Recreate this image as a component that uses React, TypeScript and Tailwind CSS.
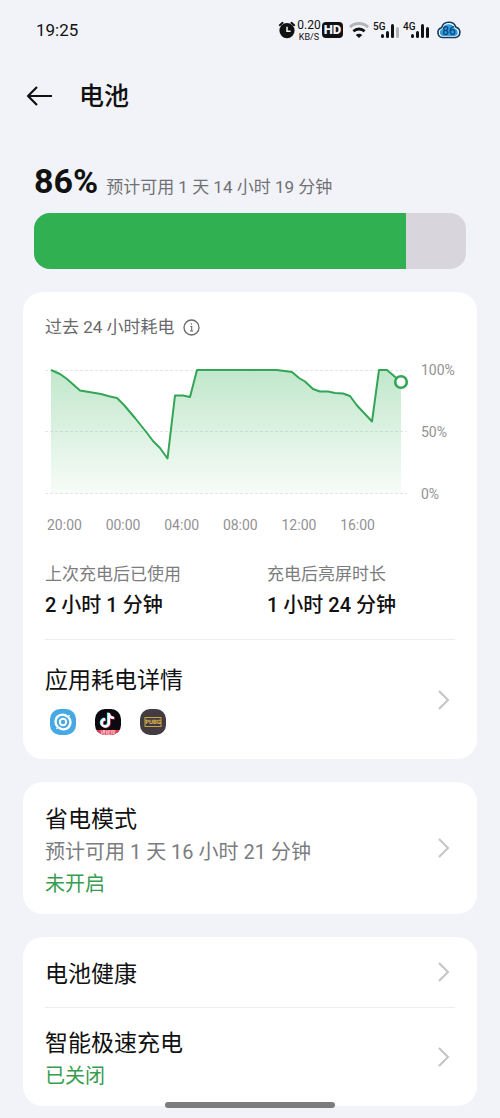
import React from 'react';

type Point = [number, number];

const levels: Point[] = [
    [6, 8], [15, 12], [22, 17], [35, 28.5], [56, 32], [65, 34.5], [72, 36], [79, 43],
    [90, 56], [102, 71], [108, 79], [115, 86], [122.5, 96.5], [130, 33.5], [138, 33.5],
    [145, 35], [152, 8], [232, 8], [247, 10], [254, 16], [260, 19.5], [268, 27],
    [275, 29.5], [283, 29.5], [290, 31], [298, 31.5], [305, 34], [312, 43.5],
    [320, 52], [327, 59.5], [334, 8], [342, 8], [356, 20],
];

const hours = ['20:00', '00:00', '04:00', '08:00', '12:00', '16:00'];

const Chevron: React.FC = () => (
    <svg width="14" height="22" viewBox="0 0 14 22" className="shrink-0 mr-1" fill="none" stroke="#c4c4c6" strokeWidth="2">
        <path d="M2 2l9 9-9 9" />
    </svg>
);

const StatusBar: React.FC = () => (
    <div className="flex items-center justify-between h-15 pl-9 pr-[38px] text-[#111]">
        <span className="text-[17px] leading-6">19:25</span>
        <div className="flex items-center">
            <svg width="18" height="18" viewBox="0 0 18 18" aria-label="闹钟">
                <path d="M1.8 4.2L4.6 1.8M16.2 4.2L13.4 1.8" stroke="#111" strokeWidth="2" strokeLinecap="round" />
                <circle cx="9" cy="9.6" r="7.6" fill="#111" />
                <path d="M9 5.8v4.4h3.6" fill="none" stroke="#f2f3f8" strokeWidth="1.5" />
            </svg>
            <div className="flex flex-col items-center w-[26px]">
                <span className="text-[12px] leading-[13px]">0.20</span>
                <span className="text-[9px] leading-[10px]">KB/S</span>
            </div>
            <span className="flex items-center justify-center w-[21px] h-4 rounded-[4px] bg-[#111] text-[#f2f3f8] text-[13px] font-black">HD</span>
            <svg width="20" height="16" viewBox="0 0 20 16" className="ml-[6px]" fill="none" aria-label="Wi-Fi">
                <path d="M1 5.2a13 13 0 0 1 18 0" stroke="#b4b5b9" strokeWidth="3" />
                <path d="M4.4 9.2a8.2 8.2 0 0 1 11.2 0" stroke="#111" strokeWidth="2.8" />
                <path d="M6.8 13a4.6 4.6 0 0 1 6.4 0L10 16z" fill="#111" />
            </svg>
            <svg width="26" height="16" viewBox="0 0 26 16" className="ml-[5px] overflow-visible" fill="#111">
                <text x="-1" y="7.5" fontSize="10" fontWeight="500">5G</text>
                <rect x="7" y="12" width="3" height="4" rx="1.5" />
                <rect x="12" y="9" width="3" height="7" rx="1.5" />
                <rect x="17" y="2" width="3" height="14" rx="1.5" />
                <rect x="22" y="5" width="3" height="11" rx="1.5" fill="#b4b5b9" />
            </svg>
            <svg width="26" height="16" viewBox="0 0 26 16" className="ml-1 overflow-visible" fill="#111">
                <text x="-1" y="7.5" fontSize="10" fontWeight="500">4G</text>
                <rect x="7" y="12" width="3" height="4" rx="1.5" />
                <rect x="12" y="9" width="3" height="7" rx="1.5" />
                <rect x="17" y="2" width="3" height="14" rx="1.5" />
                <rect x="22" y="5" width="3" height="11" rx="1.5" />
            </svg>
            <svg width="26" height="18" viewBox="0 0 26 18" className="ml-[6px]">
                <path d="M6.5 16.5a5 5 0 0 1-.9-9.8 7.6 7.6 0 0 1 14.4-.5 5.3 5.3 0 0 1-.4 10.3z" fill="#fff" stroke="#123a5c" strokeWidth="1.6" />
                <path d="M7 15a3.5 3.5 0 0 1-.4-6.9 6.3 6.3 0 0 1 12.2-.4 3.8 3.8 0 0 1 .4 7.3z" fill="#2f9fe8" />
                <text x="13" y="14" fontSize="12" fontWeight="500" textAnchor="middle" fill="#0b4778">86</text>
            </svg>
        </div>
    </div>
);

const BatteryChart: React.FC = () => {
    const line = levels.map(([x, y]) => `${x},${y}`).join(' ');
    const [lastX, lastY] = levels[levels.length - 1];

    return (
        <div className="mt-[23px] text-sm text-[#929294]">
            <div className="flex">
                <svg viewBox="0 0 362 140" className="flex-1 min-w-0 overflow-visible" fill="none" aria-label="电量曲线">
                    <defs>
                        <linearGradient id="area" x1="0" y1="0" x2="0" y2="1">
                            <stop offset="0" stopColor="#31b052" stopOpacity="0.3" />
                            <stop offset="1" stopColor="#31b052" stopOpacity="0.04" />
                        </linearGradient>
                    </defs>
                    <path d="M0 8.5h362M0 69.5h362M0 131.5h362" stroke="#e4e6e6" strokeDasharray="3 2" />
                    <polygon points={`6,131 ${line} ${lastX},131`} fill="url(#area)" />
                    <polyline points={line} stroke="#33a556" strokeWidth="2" strokeLinejoin="round" />
                    <circle cx={lastX} cy={lastY} r="5.8" fill="#fff" stroke="#33a556" strokeWidth="2.6" />
                </svg>
                <div className="flex flex-col justify-between w-[48px] pl-[14px] leading-4">
                    <span>100%</span>
                    <span>50%</span>
                    <span>0%</span>
                </div>
            </div>
            <div className="flex justify-between mt-[15px] pl-[2px] pr-20 leading-4">
                {hours.map((hour) => (
                    <span key={hour}>{hour}</span>
                ))}
            </div>
        </div>
    );
}

const AppIcons: React.FC = () => (
    <div className="flex mt-3 ml-[5px] gap-[19px]">
        <svg width="26" height="26" viewBox="0 0 26 26" fill="none">
            <rect width="26" height="26" rx="10" fill="#47a9e3" />
            <path d="M7.6 17.6A7 7 0 0 1 17.4 7.6M18.4 8.4A7 7 0 0 1 8.6 18.4" stroke="#fff" strokeWidth="2.4" />
            <circle cx="13" cy="13" r="3.2" stroke="#fff" strokeWidth="2" />
            <path d="M17.2 8.6l2.4-2.4M8.8 17.4l-2.4 2.4" stroke="#fff" strokeWidth="1.4" />
        </svg>
        <svg width="26" height="26" viewBox="0 0 26 26" fill="none">
            <defs>
                <clipPath id="tile">
                    <rect width="26" height="26" rx="10" />
                </clipPath>
            </defs>
            <g clipPath="url(#tile)">
                <rect width="26" height="26" fill="#0d0910" />
                <rect y="21" width="26" height="5" fill="#e8384f" />
                <g strokeWidth="2.4">
                    <path d="M13.1 3.6v9.8a3.6 3.6 0 1 1-3.6-3.6M13.1 3.8c.3 3 2.4 4.4 5.2 4.6" stroke="#2ee6e2" />
                    <path d="M14.5 4.6v9.8a3.6 3.6 0 1 1-3.6-3.6M14.5 4.8c.3 3 2.4 4.4 5.2 4.6" stroke="#f5405f" />
                    <path d="M13.8 4.1v9.8a3.6 3.6 0 1 1-3.6-3.6M13.8 4.3c.3 3 2.4 4.4 5.2 4.6" stroke="#fff" />
                </g>
                <text x="13" y="25.4" fontSize="5" fontWeight="700" textAnchor="middle" fill="#ffc4cb">短视频</text>
            </g>
        </svg>
        <svg width="26" height="26" viewBox="0 0 26 26" fill="none">
            <rect width="26" height="26" rx="10" fill="#423b42" />
            <rect x="5" y="8.5" width="16" height="9" stroke="#c9a63e" />
            <text x="13" y="15.2" fontSize="6" fontWeight="700" textAnchor="middle" textRendering="geometricPrecision" fill="#e3bd48">PUBG</text>
        </svg>
    </div>
);

const App: React.FC = () => {
    const percent = 86;

    return (
        <div className="relative min-h-screen pb-3 bg-[#f2f3f8] text-[#111] font-[Roboto,'Noto_Sans_CJK_SC',sans-serif]">
            <StatusBar />

            <header className="flex items-center h-[72px] pl-[26px]">
                <button type="button" aria-label="返回">
                    <svg width="27" height="20" viewBox="0 0 27 20" fill="none" stroke="#111" strokeWidth="2.2">
                        <path d="M26 10H2M11 1L2 10l9 9" strokeLinejoin="round" />
                    </svg>
                </button>
                <h1 className="pt-[2px] ml-[26px] text-[25px] leading-8 font-medium">电池</h1>
            </header>

            <section className="px-[34px] pt-[29px]">
                <div className="flex items-baseline gap-2">
                    <span className="text-[34px] leading-10 font-bold">{percent}%</span>
                    <span className="text-[17px] text-[#707174]">预计可用 1 天 14 小时 19 分钟</span>
                </div>
                <div className="h-14 mt-3 overflow-hidden rounded-2xl bg-[#d8d6dc]">
                    <div className="h-full bg-[#31b052]" style={{ width: `${percent}%` }} />
                </div>
            </section>

            <main className="flex flex-col gap-[23px] px-[23px] mt-[23px]">
                <section className="px-[22px] bg-white rounded-[20px]">
                    <div className="flex items-center gap-2 pt-[23px] leading-6">
                        <h2 className="text-[17px] text-[#68696b]">过去 24 小时耗电</h2>
                        <button type="button" aria-label="说明">
                            <svg width="17" height="17" viewBox="0 0 17 17" fill="none" stroke="#68696b" strokeWidth="1.3">
                                <circle cx="8.5" cy="8.5" r="7.5" />
                                <path d="M7.2 7.5h1.5V12M7 12h3.2" strokeWidth="1.1" />
                                <circle cx="8.5" cy="5" r=".8" fill="#68696b" stroke="none" />
                            </svg>
                        </button>
                    </div>

                    <BatteryChart />

                    <div className="grid grid-cols-[222fr_188fr] mt-[29px] pb-5 border-b border-[#ececee]">
                        <div>
                            <p className="text-[17px] leading-6 text-[#7b7c7e]">上次充电后已使用</p>
                            <p className="mt-[5px] text-[20px] leading-7 font-medium">2 小时 1 分钟</p>
                        </div>
                        <div>
                            <p className="text-[17px] leading-6 text-[#7b7c7e]">充电后亮屏时长</p>
                            <p className="mt-[5px] text-[20px] leading-7 font-medium">1 小时 24 分钟</p>
                        </div>
                    </div>

                    <button type="button" className="flex items-center justify-between w-full pt-[25px] pb-6 text-left">
                        <div>
                            <p className="text-[23px] leading-8">应用耗电详情</p>
                            <AppIcons />
                        </div>
                        <Chevron />
                    </button>
                </section>

                <section className="px-[22px] bg-white rounded-[20px]">
                    <button type="button" className="flex items-center justify-between w-full py-[14px] text-left">
                        <div className="pt-2">
                            <p className="text-[23px] leading-8">省电模式</p>
                            <p className="text-[20px] leading-8 text-[#7b7c7e]">预计可用 1 天 16 小时 21 分钟</p>
                            <p className="text-[20px] leading-8 text-[#389c50]">未开启</p>
                        </div>
                        <Chevron />
                    </button>
                </section>

                <section className="px-[22px] bg-white rounded-[20px]">
                    <button type="button" className="flex items-center justify-between w-full py-4 text-left border-b border-[#ececee]">
                        <p className="pt-[6px] text-[23px] leading-8">电池健康</p>
                        <Chevron />
                    </button>
                    <button type="button" className="flex items-center justify-between w-full py-[14px] text-left">
                        <div className="pt-[6px]">
                            <p className="text-[23px] leading-8">智能极速充电</p>
                            <p className="text-[20px] leading-8 text-[#389c50]">已关闭</p>
                        </div>
                        <Chevron />
                    </button>
                </section>
            </main>

            {/* gesture bar */}
            <div className="absolute bottom-[10px] left-1/2 w-[170px] h-[6px] -translate-x-1/2 rounded-full bg-[#7c7c7d]" />
        </div>
    );
}

export default App;
